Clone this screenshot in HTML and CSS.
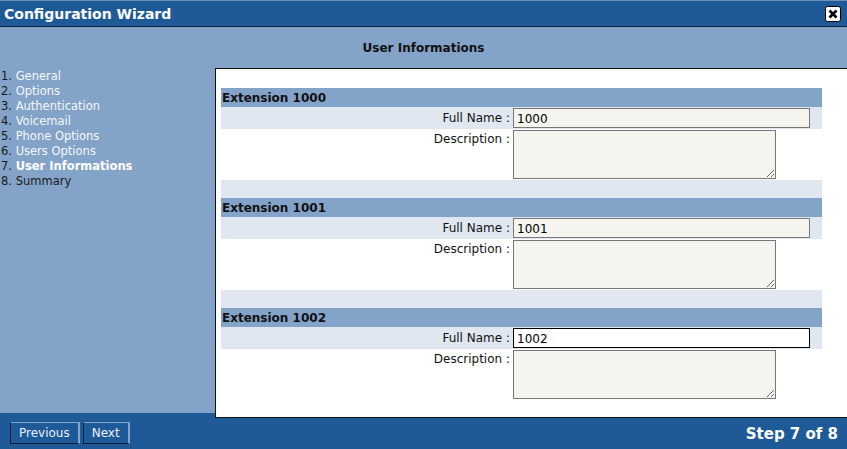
FILE: index.html
```html
<!DOCTYPE html>
<html lang="en">
<head>
<meta charset="UTF-8" />
<title>Configuration Wizard</title>
<link rel="stylesheet" href="styles.css">
</head>
<body>

<div class="wizard">
  <div class="titlebar">
    <span class="title">Configuration Wizard</span>
    <span class="close">
      <svg width="16" height="16" viewBox="0 0 16 16">
        <rect x="0.5" y="0.5" width="15" height="15" rx="2" fill="#fff" stroke="#000"/>
        <path d="M4.5 4.5 L11.5 11.5 M11.5 4.5 L4.5 11.5" stroke="#000" stroke-width="2.6"/>
      </svg>
    </span>
  </div>

  <div class="main">
    <div class="page-title">User Informations</div>
    <div class="main-body">
      <ul class="steps">
        <li class="done"><b>1.</b> <span>General</span></li>
        <li class="done"><b>2.</b> <span>Options</span></li>
        <li class="done"><b>3.</b> <span>Authentication</span></li>
        <li class="done"><b>4.</b> <span>Voicemail</span></li>
        <li class="done"><b>5.</b> <span>Phone Options</span></li>
        <li class="done"><b>6.</b> <span>Users Options</span></li>
        <li class="current"><b>7.</b> <span>User Informations</span></li>
        <li><b>8.</b> <span>Summary</span></li>
      </ul>

      <div class="panel">
        <div class="ext">
          <div class="ext-head">Extension 1000</div>
          <div class="row alt">
            <label class="lbl">Full Name :</label>
            <input class="name" type="text" value="1000">
          </div>
          <div class="row">
            <label class="lbl">Description :</label>
            <textarea class="desc"></textarea>
          </div>
          <div class="spacer alt"></div>
        </div>

        <div class="ext">
          <div class="ext-head">Extension 1001</div>
          <div class="row alt">
            <label class="lbl">Full Name :</label>
            <input class="name" type="text" value="1001">
          </div>
          <div class="row">
            <label class="lbl">Description :</label>
            <textarea class="desc"></textarea>
          </div>
          <div class="spacer alt"></div>
        </div>

        <div class="ext">
          <div class="ext-head">Extension 1002</div>
          <div class="row alt">
            <label class="lbl">Full Name :</label>
            <input class="name focused" type="text" value="1002">
          </div>
          <div class="row">
            <label class="lbl">Description :</label>
            <textarea class="desc"></textarea>
          </div>
        </div>
      </div>
    </div>
  </div>

  <div class="footer">
    <div class="buttons">
      <button class="btn">Previous</button>
      <button class="btn">Next</button>
    </div>
    <div class="step-count">Step 7 of 8</div>
  </div>
</div>

</body>
</html>
```

FILE: styles.css
```css
body {
  margin: 0;
  font-family: "DejaVu Sans", Verdana, sans-serif;
  background: #84a3c9;
}
.wizard {
  width: 847px;
  height: 449px;
  display: flex;
  flex-direction: column;
  overflow: hidden;
}
.titlebar {
  height: 25px;
  background: #1f5a98;
  border-top: 1px solid #6f8fb6;
  border-bottom: 1px solid #0b1d36;
  display: flex;
  align-items: center;
  justify-content: space-between;
  padding: 0 6px 0 4px;
}
.title {
  color: #fff;
  font-weight: bold;
  font-size: 14px;
}
.close {
  display: flex;
  margin-top: 1px;
}
.main {
  flex: 1;
  background: #84a3c9;
  display: flex;
  flex-direction: column;
  position: relative;
  z-index: 1;
}
.page-title {
  height: 41px;
  line-height: 42px;
  text-align: center;
  font-weight: bold;
  font-size: 12px;
  color: #111;
}
.main-body {
  display: flex;
  flex: 1;
  margin-bottom: -5px;
}
.steps {
  list-style: none;
  margin: 0;
  padding: 1px 0 0 1px;
  width: 214px;
  font-size: 11.5px;
  line-height: 15px;
}
.steps b {
  font-weight: normal;
  color: #1a1a1a;
}
.steps li {
  color: #1a1a1a;
}
.steps .done span {
  color: #f4f7fb;
}
.steps .current span {
  color: #fff;
  font-weight: bold;
}
.panel {
  flex: 1;
  background: #fff;
  border-top: 1px solid #111;
  border-left: 1px solid #111;
  border-bottom: 1px solid #111;
  padding: 19px 25px 0 5px;
}
.ext-head {
  height: 19px;
  line-height: 20px;
  background: #84a3c9;
  font-weight: bold;
  font-size: 12px;
  color: #111;
  padding-left: 1px;
}
.row {
  display: grid;
  grid-template-columns: 289px 1fr;
  column-gap: 3px;
  align-items: start;
}
.row.alt {
  height: 22px;
  align-items: center;
}
.alt {
  background: #e0e7f0;
}
.spacer {
  height: 18px;
}
.lbl {
  text-align: right;
  font-size: 12px;
  color: #111;
  padding-top: 3px;
}
.row.alt .lbl {
  padding-top: 0;
}
.name {
  box-sizing: border-box;
  width: 297px;
  height: 20px;
  border: 1px solid #777;
  background: #f5f4ee;
  font-family: "DejaVu Sans", Verdana, sans-serif;
  font-size: 12px;
  padding: 1px 3px 0;
  margin: 0;
  color: #000;
}
.name.focused {
  background: #fff;
  border-color: #000;
}
.desc {
  box-sizing: border-box;
  width: 263px;
  height: 49px;
  margin: 1px 0 1px;
  border: 1px solid #777;
  background: #f5f4ee;
  resize: both;
  font-family: "DejaVu Sans", Verdana, sans-serif;
  font-size: 12px;
}
.footer {
  height: 36px;
  background: #1f5a98;
  display: flex;
  align-items: center;
  justify-content: space-between;
  padding: 0 9px 0 10px;
}
.buttons {
  display: flex;
  gap: 3px;
  margin-top: 9px;
  align-self: flex-start;
}
.btn {
  height: 22px;
  padding: 0 8px;
  font-family: "DejaVu Sans", Verdana, sans-serif;
  font-size: 12px;
  color: #eaf0f7;
  background: #1f5a98;
  border-top: 1px solid #84a3c9;
  border-right: 2px solid #84a3c9;
  border-left: 1px solid #0b1d36;
  border-bottom: 1px solid #0b1d36;
  cursor: pointer;
}
.step-count {
  color: #fff;
  font-weight: bold;
  font-size: 15px;
  margin-top: 5px;
}
```
